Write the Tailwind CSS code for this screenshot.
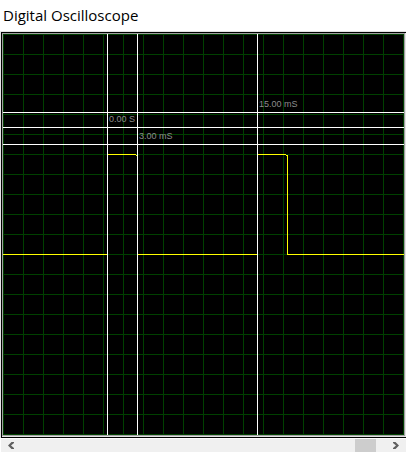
<!DOCTYPE html>
<html lang="en">
<head>
<meta charset="utf-8">
<meta name="viewport" content="width=device-width, initial-scale=1">
<title>Digital Oscilloscope</title>
<script src="https://cdn.jsdelivr.net/npm/@tailwindcss/browser@4"></script>
</head>
<body class="bg-white">
<main class="flex h-screen flex-col overflow-hidden font-['Open_Sans','Noto_Sans',sans-serif]">
  <h1 class="h-[31px] shrink-0 px-[3px] pt-[3px] text-[15px] leading-6 text-black">Digital Oscilloscope</h1>
  <section class="flex min-h-0 flex-1 border-t border-l border-[#e3e3e3]" aria-label="Waveform display">
    <div class="flex min-w-0 flex-1 border-t border-b border-l border-black">
      <div class="flex min-w-0 flex-1 border-r border-b border-[#e3e3e3]">
        <div class="min-w-0 flex-1 border border-[#a0a0a0] bg-black">
          <svg class="block size-full" shape-rendering="crispEdges" role="img" aria-label="Pulse waveform with time cursors">
            <defs>
              <pattern id="grid" width="20" height="20" patternUnits="userSpaceOnUse">
                <path d="M0 0H20V1H1V20H0Z" fill="#004000"/>
              </pattern>
            </defs>
            <rect width="100%" height="100%" fill="url(#grid)"/>
            <!-- cursors -->
            <g fill="#fff">
              <rect y="78" width="100%" height="1"/>
              <rect y="93" width="100%" height="1"/>
              <rect y="110" width="100%" height="1"/>
            </g>
            <!-- signal -->
            <g fill="#ff0">
              <rect y="220" width="105" height="1"/>
              <rect x="104" y="120" width="29" height="1"/>
              <rect x="133" y="121" width="1" height="1"/>
              <rect x="134" y="220" width="121" height="1"/>
              <rect x="254" y="120" width="29" height="1"/>
              <rect x="283" y="121" width="1" height="1"/>
              <rect x="284" y="121" width="1" height="100"/>
              <rect x="284" y="220" width="100%" height="1"/>
            </g>
            <g fill="#fff">
              <rect x="104" width="1" height="100%"/>
              <rect x="134" width="1" height="100%"/>
              <rect x="254" width="1" height="100%"/>
            </g>
            <g class="fill-[#8c8c8c] font-['Liberation_Sans',Arial,sans-serif] text-[9px]">
              <text x="106" y="88">0.00 S</text>
              <text x="136" y="105">3.00 mS</text>
              <text x="256" y="73">15.00 mS</text>
            </g>
          </svg>
        </div>
      </div>
    </div>
  </section>
  <div class="mt-px ml-px flex h-[13px] shrink-0 bg-[#f0f0f0]">
    <button type="button" class="flex w-5 items-center justify-center" aria-label="Scroll left">
      <svg class="h-[7px] w-[6px]" viewBox="0 0 6 7" fill="#606060"><path d="M3.5 0H6V1L3 3.5 6 6V7H3.5L0 3.5Z"/></svg>
    </button>
    <input type="range" min="0" max="1000" value="971" aria-label="Time position" class="m-0 h-full min-w-0 flex-1 appearance-none bg-transparent [&::-webkit-slider-thumb]:h-[13px] [&::-webkit-slider-thumb]:w-[21px] [&::-webkit-slider-thumb]:appearance-none [&::-webkit-slider-thumb]:bg-[#cdcdcd]">
    <button type="button" class="flex w-5 items-center justify-center" aria-label="Scroll right">
      <svg class="h-[7px] w-[6px]" viewBox="0 0 6 7" fill="#606060"><path d="M2.5 0H0V1L3 3.5 0 6V7H2.5L6 3.5Z"/></svg>
    </button>
  </div>
</main>
</body>
</html>
